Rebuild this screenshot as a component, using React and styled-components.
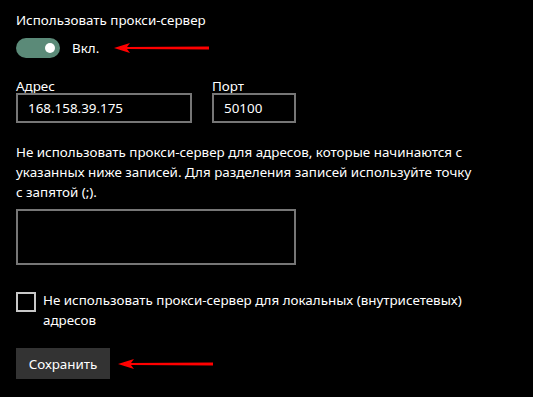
import React from "react";
import styled, { createGlobalStyle } from "styled-components";

const GlobalStyle = createGlobalStyle`
  html, body {
    margin: 0;
    background: #000;
  }
  body {
    font-family: "Noto Sans", "Open Sans", sans-serif;
    color: #fff;
  }
`;

const Page = styled.div`
  width: 533px;
  height: 397px;
  box-sizing: border-box;
  padding: 10px 16px 0;
  display: flex;
  flex-direction: column;
  font-size: 13.4px;
  line-height: 20px;
`;

const Title = styled.div`
  height: 20px;
`;

const ToggleRow = styled.div`
  display: flex;
  align-items: center;
  margin-top: 8px;
  height: 20px;
`;

const Switch = styled.div`
  width: 44px;
  height: 20px;
  border-radius: 10px;
  background: #5b8a78;
  display: flex;
  align-items: center;
  justify-content: flex-end;
  padding-right: 5px;
  box-sizing: border-box;
`;

const Knob = styled.span`
  width: 10px;
  height: 10px;
  border-radius: 50%;
  background: #fff;
`;

const ToggleText = styled.span`
  margin-left: 12px;
`;

const Arrow = styled.svg`
  display: block;
  margin-left: ${p => p.$gap}px;
`;

const Fields = styled.div`
  display: flex;
  gap: 20px;
  margin-top: 20px;
`;

const Field = styled.label`
  display: flex;
  flex-direction: column;
`;

const Label = styled.span`
  line-height: 16px;
  height: 15px;
`;

const Input = styled.div`
  box-sizing: border-box;
  width: ${p => p.$w}px;
  height: 30px;
  border: 2px solid #767676;
  padding: 0 10px;
  display: flex;
  align-items: center;
`;

const Note = styled.p`
  margin: 19px 0 0;
`;

const Area = styled.div`
  box-sizing: border-box;
  width: 280px;
  height: 56px;
  border: 2px solid #767676;
  margin-top: 7px;
`;

const CheckRow = styled.label`
  display: flex;
  align-items: flex-start;
  margin-top: 25px;
`;

const Box = styled.span`
  flex: none;
  box-sizing: border-box;
  width: 20px;
  height: 20px;
  border: 2px solid #c8c8c8;
  margin-top: 2px;
  margin-right: 7px;
`;

const ButtonRow = styled.div`
  display: flex;
  align-items: center;
  margin-top: 18px;
`;

const Button = styled.button`
  height: 31px;
  width: 94px;
  border: none;
  background: #333;
  color: #fff;
  font: inherit;
  padding: 0;
`;

const RedArrow = ({ width, gap }) => (
  <Arrow $gap={gap} width={width} height="12" viewBox={`0 0 ${width} 12`}>
    <path
      d={`M0 6 L16 1 L13 5 L${width} 4.5 L${width} 7.5 L13 7 L16 11 Z`}
      fill="#f00"
    />
  </Arrow>
);

export default function App() {
  return (
    <Page>
      <GlobalStyle />
      <Title>Использовать прокси-сервер</Title>
      <ToggleRow>
        <Switch>
          <Knob />
        </Switch>
        <ToggleText>Вкл.</ToggleText>
        <RedArrow width={95} gap={15} />
      </ToggleRow>
      <Fields>
        <Field>
          <Label>Адрес</Label>
          <Input $w={176}>168.158.39.175</Input>
        </Field>
        <Field>
          <Label>Порт</Label>
          <Input $w={84}>50100</Input>
        </Field>
      </Fields>
      <Note>
        Не использовать прокси-сервер для адресов, которые начинаются с<br />
        указанных ниже записей. Для разделения записей используйте точку<br />
        с запятой (;).
      </Note>
      <Area />
      <CheckRow>
        <Box />
        <span>
          Не использовать прокси-сервер для локальных (внутрисетевых)
          <br />
          адресов
        </span>
      </CheckRow>
      <ButtonRow>
        <Button>Сохранить</Button>
        <RedArrow width={95} gap={8} />
      </ButtonRow>
    </Page>
  );
}
